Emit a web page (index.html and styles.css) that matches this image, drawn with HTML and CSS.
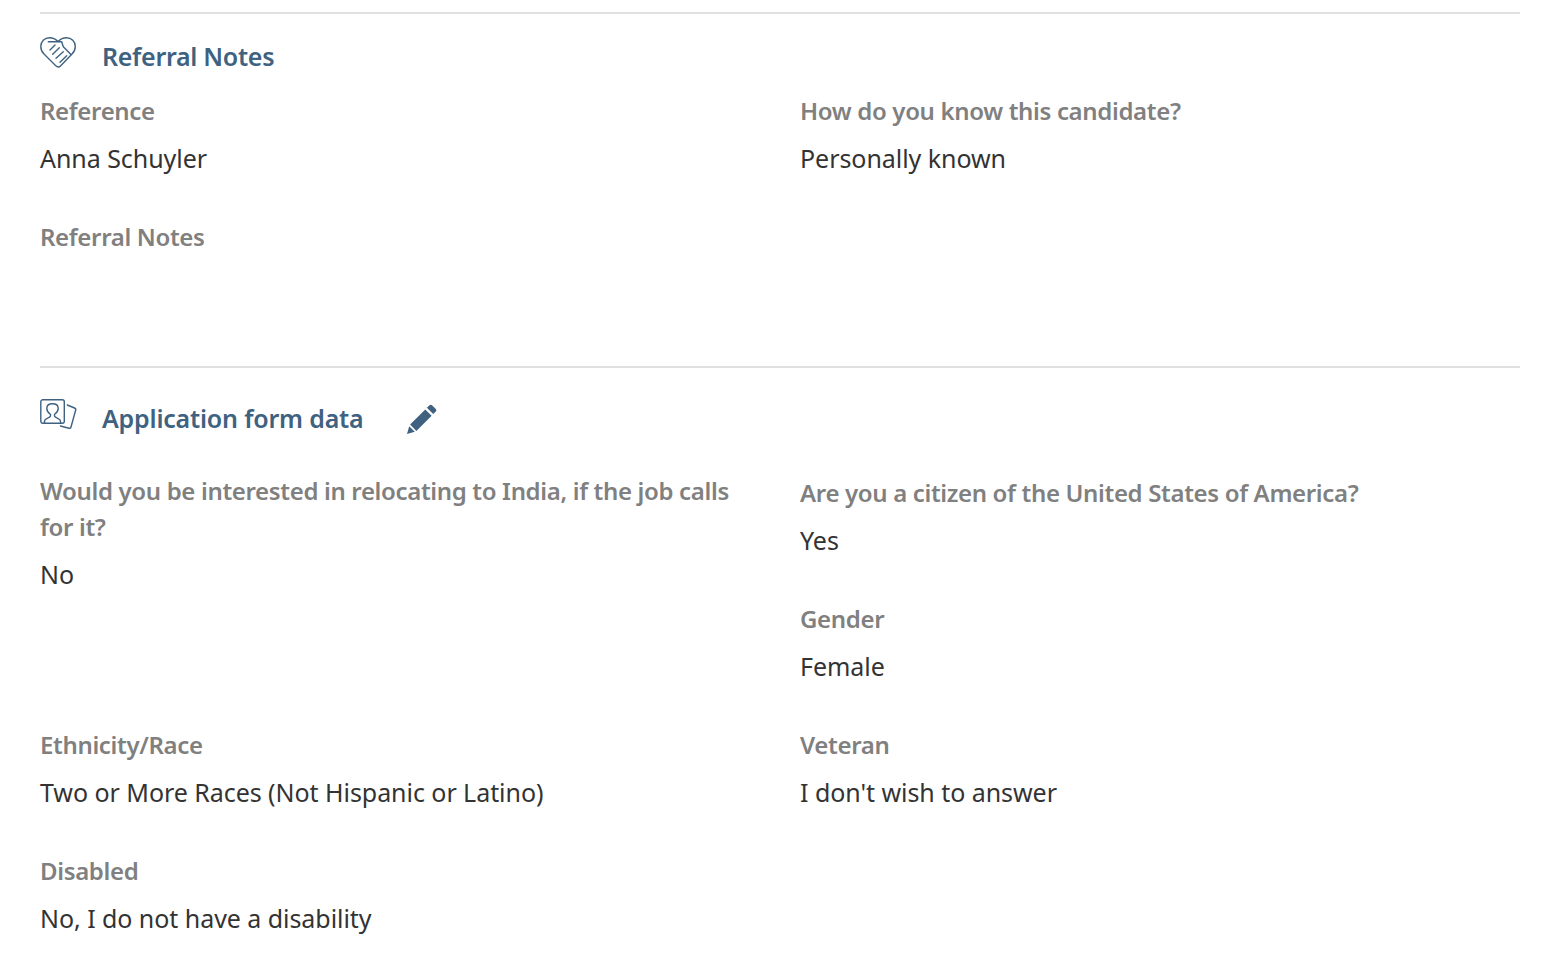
FILE: index.html
```html
<!DOCTYPE html>
<html lang="en">
<head>
    <meta charset="UTF-8">
    <title>Candidate details</title>
    <link rel="stylesheet" href="styles.css">
</head>
<body>
<div class="section section-referral">
    <div class="section-head">
        <svg class="section-icon" width="36" height="32" viewBox="0 0 36 32" fill="none" stroke="#3e6280" stroke-width="1.4" stroke-linecap="round" stroke-linejoin="round">
            <path d="M18 4.5C15 1.5 12.5.8 9.5.8 4.500.8.8 4.500.8 9.500c0 3 1.200 5.500 3.200 7.500l11.500 11.500c1.500 1.500 3.500 2 5 .5L32 17c2-2 3.300-4.500 3.300-7.500C35.300 4.500 31.500.8 26.500.8c-4 0-6.500 1.700-8.500 3.700z"/>
            <path d="M8.300 4.700h13.400l1.600 5 7.400 7.600"/>
            <path d="M10 13l5-5M12.700 17.300l6.600-6.600M16 21.300l7.300-6.600M20 25.300l6.700-6.600"/>
        </svg>
        <h2 class="section-title">Referral Notes</h2>
    </div>
    <div class="fields">
        <div class="field">
            <div class="field-label">Reference</div>
            <div class="field-value">Anna Schuyler</div>
        </div>
        <div class="field">
            <div class="field-label">How do you know this candidate?</div>
            <div class="field-value">Personally known</div>
        </div>
        <div class="field">
            <div class="field-label">Referral Notes</div>
            <div class="field-value"></div>
        </div>
    </div>
</div>

<div class="section section-form">
    <div class="section-head">
        <svg class="section-icon" width="37" height="32" viewBox="0 0 37 32" fill="none" stroke="#3e6280" stroke-width="1.4" stroke-linecap="round" stroke-linejoin="round">
            <rect x=".8" y=".8" width="23.5" height="23.5" rx="2"/>
            <path d="M4.500 24v-2c0-2.500 5.500-3 6-5v-1.500C8.500 14 6.800 11.500 6.800 9.500c0-3 2.200-4.700 5.700-4.700s5.700 1.700 5.700 4.700c0 2-1.700 4.500-3.700 6V17c.5 2 6 2.500 6 5v2"/>
            <path d="M27.300 6l7.200 3c1 .4 1.500 1.200 1.200 2L31 28c-.3 1-1 1.500-2 1.200L20.500 27"/>
        </svg>
        <h2 class="section-title">Application form data</h2>
        <svg class="edit-icon" width="30" height="30" viewBox="0 0 30 30" fill="#3e6280">
            <path d="M22.500 1.200c.7-.7 1.800-.7 2.500 0l3.800 3.800c.7.7.7 1.800 0 2.500l-2.600 2.600-6.300-6.300z"/>
            <path d="M18.300 5.400l6.300 6.300L9.400 26.900l-6.300-6.300z"/>
            <path d="M2.200 22.200l5.600 5.600L0 30z"/>
        </svg>
    </div>
    <div class="fields">
        <div class="field field-tall">
            <div class="field-label">Would you be interested in relocating to India, if the job calls for it?</div>
            <div class="field-value">No</div>
        </div>
        <div class="field">
            <div class="field-label">Are you a citizen of the United States of America?</div>
            <div class="field-value">Yes</div>
        </div>
        <div class="field">
            <div class="field-label">Gender</div>
            <div class="field-value">Female</div>
        </div>
        <div class="field">
            <div class="field-label">Ethnicity/Race</div>
            <div class="field-value">Two or More Races (Not Hispanic or Latino)</div>
        </div>
        <div class="field">
            <div class="field-label">Veteran</div>
            <div class="field-value">I don't wish to answer</div>
        </div>
        <div class="field">
            <div class="field-label">Disabled</div>
            <div class="field-value">No, I do not have a disability</div>
        </div>
    </div>
</div>
</body>
</html>
```

FILE: styles.css
```css
body {
    font-family: "Noto Sans", Arial, sans-serif;
    background-color: #fff;
    margin: 0;
    padding: 12px 32px 0 40px;
    overflow: hidden;
}
.section {
    border-top: 2px solid #e0e0e0;
}
.section-referral {
    height: 352px;
}
.section-head {
    display: flex;
    align-items: flex-start;
}
.section-referral .section-head {
    padding-top: 23px;
    height: 55px;
}
.section-form .section-head {
    padding-top: 31px;
    height: 75px;
}
.section-icon {
    flex-shrink: 0;
}
.section-title {
    margin: 1px 0 0 26px;
    font-size: 25px;
    line-height: 36px;
    font-weight: 600;
    color: #3e6280;
    letter-spacing: -0.3px;
}
.section-form .section-title {
    margin-left: 25px;
    letter-spacing: -0.2px;
}
.edit-icon {
    margin: 5px 0 0 44px;
}
.fields {
    display: grid;
    grid-template-columns: 760px 720px;
}
.field {
    height: 125px;
    padding-top: 1px;
}
.field-tall {
    grid-row: span 2;
    height: auto;
    margin-top: -1px;
    padding-top: 0;
}
.field-label {
    font-size: 24px;
    line-height: 36px;
    font-weight: 600;
    color: #808080;
    letter-spacing: -0.34px;
    max-width: 700px;
}
.field-value {
    margin-top: 11px;
    font-size: 25px;
    line-height: 36px;
    color: #333;
    letter-spacing: -0.05px;
}
```
